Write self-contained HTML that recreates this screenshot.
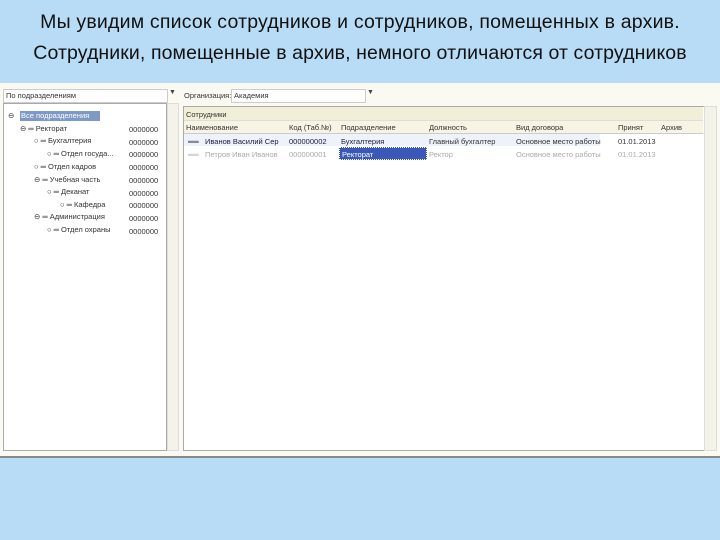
<!DOCTYPE html><html><head><meta charset="utf-8"><style>
body{margin:0;width:720px;height:540px;background:#b9dcf6;position:relative;overflow:hidden;font-family:"Liberation Sans",sans-serif}
.t{position:absolute;left:0;width:720px;text-align:center;font-size:19.5px;color:#111;white-space:nowrap}
.a{position:absolute}
.s{font-size:7.5px;color:#333;white-space:nowrap;position:absolute}
</style></head><body>
<div class="t" style="top:11px;letter-spacing:0.2px">Мы увидим список сотрудников и сотрудников, помещенных в архив.</div>
<div class="t" style="top:42px;letter-spacing:0.1px">Сотрудники, помещенные в архив, немного отличаются от сотрудников</div>
<div class="a" style="left:0;top:83px;width:720px;height:373px;background:#fbfaf2;border-bottom:2px solid #888"></div>
<!-- left -->
<div class="a" style="left:3px;top:89px;width:163px;height:12px;background:#fff;border:1px solid #ccc"></div>
<div class="s" style="left:6px;top:91px">По подразделениям</div>
<div class="a" style="left:169px;top:89px;width:9px;height:12px;font-size:7px;color:#444">▼</div>
<div class="a" style="left:3px;top:103px;width:162px;height:346px;background:#fff;border:1px solid #aaa"></div>
<div class="a" style="left:167px;top:103px;width:10px;height:346px;background:#f4f3ea;border:1px solid #ddd"></div>
<div class="a" style="left:20px;top:111px;width:80px;height:10px;background:#7e99c6"></div>
<div class="s" style="left:8px;top:111px">⊖</div>
<div class="s" style="left:21px;top:111px;color:#fff">Все подразделения</div>
<div class="s" style="left:20px;top:124px">⊖ ═ Ректорат</div>
<div class="s" style="left:34px;top:136px">○ ═ Бухгалтерия</div>
<div class="s" style="left:47px;top:149px">○ ═ Отдел госуда...</div>
<div class="s" style="left:34px;top:162px">○ ═ Отдел кадров</div>
<div class="s" style="left:34px;top:175px">⊖ ═ Учебная часть</div>
<div class="s" style="left:47px;top:187px">○ ═ Деканат</div>
<div class="s" style="left:60px;top:200px">○ ═ Кафедра</div>
<div class="s" style="left:34px;top:212px">⊖ ═ Администрация</div>
<div class="s" style="left:47px;top:225px">○ ═ Отдел охраны</div>
<div class="s" style="left:129px;top:124px;line-height:12.7px">0000000<br>0000000<br>0000000<br>0000000<br>0000000<br>0000000<br>0000000<br>0000000<br>0000000</div>
<!-- right -->
<div class="s" style="left:184px;top:91px">Организация:</div>
<div class="a" style="left:231px;top:89px;width:133px;height:12px;background:#fff;border:1px solid #ccc"></div>
<div class="s" style="left:234px;top:91px">Академия</div>
<div class="a" style="left:367px;top:89px;font-size:7px;color:#444">▼</div>
<div class="a" style="left:183px;top:106px;width:520px;height:343px;background:#fff;border:1px solid #aaa"></div>
<div class="a" style="left:184px;top:107px;width:519px;height:13px;background:#f2efd9;border-bottom:1px solid #ddd"></div>
<div class="s" style="left:186px;top:110px">Сотрудники</div>
<div class="a" style="left:184px;top:121px;width:519px;height:12px;background:#f7f4e4;border-bottom:1px solid #ccc"></div>
<div class="s" style="left:186px;top:123px">Наименование</div>
<div class="s" style="left:289px;top:123px">Код (Таб.№)</div>
<div class="s" style="left:341px;top:123px">Подразделение</div>
<div class="s" style="left:429px;top:123px">Должность</div>
<div class="s" style="left:516px;top:123px">Вид договора</div>
<div class="s" style="left:618px;top:123px">Принят</div>
<div class="s" style="left:661px;top:123px">Архив</div>
<div class="a" style="left:184px;top:134px;width:416px;height:12px;background:#eef2fa"></div>
<div class="s" style="left:188px;top:137px;color:#1a1a40">══</div>
<div class="s" style="left:205px;top:137px;color:#1a1a40">Иванов Василий Сер</div>
<div class="s" style="left:289px;top:137px;color:#1a1a40">000000002</div>
<div class="s" style="left:341px;top:137px;color:#1a1a40">Бухгалтерия</div>
<div class="s" style="left:429px;top:137px">Главный бухгалтер</div>
<div class="s" style="left:516px;top:137px">Основное место работы</div>
<div class="s" style="left:618px;top:137px">01.01.2013</div>
<div class="a" style="left:339px;top:147px;width:86px;height:11px;background:#3b57b8;border:1px dotted #fff"></div>
<div class="s" style="left:188px;top:150px;color:#aaa">══</div>
<div class="s" style="left:205px;top:150px;color:#aaa">Петров Иван Иванов</div>
<div class="s" style="left:289px;top:150px;color:#aaa">000000001</div>
<div class="s" style="left:342px;top:150px;color:#fff">Ректорат</div>
<div class="s" style="left:429px;top:150px;color:#aaa">Ректор</div>
<div class="s" style="left:516px;top:150px;color:#aaa">Основное место работы</div>
<div class="s" style="left:618px;top:150px;color:#aaa">01.01.2013</div>
<div class="a" style="left:704px;top:106px;width:11px;height:343px;background:#f4f3ea;border:1px solid #ddd"></div>
</body></html>
